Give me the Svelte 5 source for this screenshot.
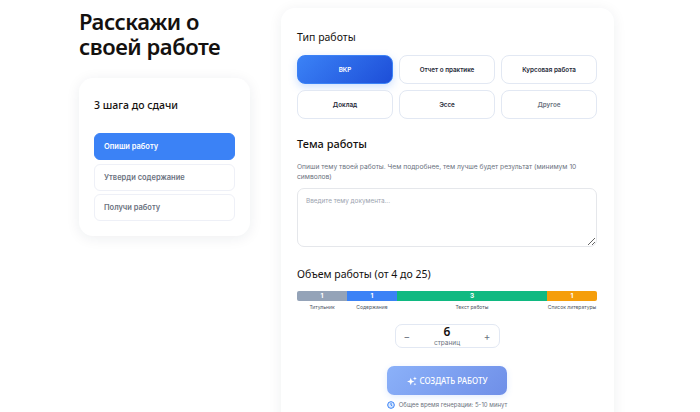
<script>
  const types = [
    { label: 'ВКР', cls: 'active' },
    { label: 'Отчет о практике', cls: '' },
    { label: 'Курсовая работа', cls: '' },
    { label: 'Доклад', cls: '' },
    { label: 'Эссе', cls: '' },
    { label: 'Другое', cls: 'muted' }
  ];
  const parts = [
    { n: 1, name: 'Титульник', color: '#94a3b8', grow: 1 },
    { n: 1, name: 'Содержание', color: '#3b82f6', grow: 1 },
    { n: 3, name: 'Текст работы', color: '#10b981', grow: 3 },
    { n: 1, name: 'Список литературы', color: '#f59e0b', grow: 1 }
  ];
</script>

<div class="page">
  <aside class="left">
    <h1>Расскажи о своей работе</h1>
    <section class="steps">
      <h2>3 шага до сдачи</h2>
      <div class="step current">Опиши работу</div>
      <div class="step">Утверди содержание</div>
      <div class="step">Получи работу</div>
    </section>
  </aside>

  <main class="card">
    <h3>Тип работы</h3>
    <div class="types">
      {#each types as t}
        <button class="type {t.cls}">{t.label}</button>
      {/each}
    </div>

    <h3 class="topic">Тема работы</h3>
    <p class="hint">Опиши тему твоей работы. Чем подробнее, тем лучше будет результат (минимум 10 символов)</p>
    <textarea placeholder="Введите тему документа..."></textarea>

    <h3 class="volume">Объем работы (от 4 до 25)</h3>
    <div class="bar">
      {#each parts as p}
        <div class="seg" style="flex-grow:{p.grow}">
          <div class="fill" style="background:{p.color}">{p.n}</div>
          <div class="name">{p.name}</div>
        </div>
      {/each}
    </div>

    <div class="stepper">
      <span class="sign">−</span>
      <div class="count"><b>6</b><small>страниц</small></div>
      <span class="sign">+</span>
    </div>

    <button class="create">
      <svg width="10" height="10" viewBox="0 0 24 24" fill="#fff" aria-hidden="true">
        <path d="M9 4l2.400 6.600L18 13l-6.600 2.400L9 22l-2.400-6.600L0 13l6.600-2.400z" />
        <path d="M19 1l1.300 3.700L24 6l-3.700 1.300L19 11l-1.300-3.700L14 6l3.700-1.300z" />
        <path d="M19 16l1 2.500 2.500 1-2.500 1-1 2.500-1-2.500-2.500-1 2.500-1z" />
      </svg>
      СОЗДАТЬ РАБОТУ
    </button>
    <div class="time">
      <svg width="8" height="8" viewBox="0 0 24 24" fill="#dbeafe" stroke="#3b82f6" stroke-width="3" aria-hidden="true">
        <circle cx="12" cy="12" r="10" />
        <path d="M12 6v6l4 3" fill="none" />
      </svg>
      Общее время генерации: 5-10 минут
    </div>
  </main>
</div>

<style>
  :global(body) {
    margin: 0;
    background: #fff;
    overflow: hidden;
  }
  .page {
    display: flex;
    align-items: flex-start;
    gap: 31px;
    height: 412px;
    padding: 8px 0 0 79px;
    box-sizing: border-box;
    overflow: hidden;
    font-family: Inter, 'Noto Sans', sans-serif;
  }
  .left {
    width: 171px;
    flex: none;
  }
  h1 {
    margin: 1px 0 19px;
    width: 171px;
    font: 600 22px/25px 'Noto Sans', sans-serif;
    letter-spacing: -0.45px;
    color: #14110f;
  }
  .steps {
    background: #fff;
    border-radius: 14px;
    box-shadow: 0 2px 14px rgba(30, 41, 59, 0.08);
    padding: 19px 15px 15px;
    box-sizing: border-box;
    height: 158px;
  }
  h2 {
    margin: 0 0 20px;
    font: 500 10.5px/16px 'Noto Sans', sans-serif;
    color: #14110f;
  }
  .step {
    height: 27px;
    box-sizing: border-box;
    margin-bottom: 3.700px;
    border: 1px solid #eef0f7;
    border-radius: 6px;
    padding-left: 9px;
    display: flex;
    align-items: center;
    font-size: 7.500px;
    font-weight: 600;
    color: #6b7280;
    background: #fff;
  }
  .step.current {
    background: #3b82f6;
    border-color: #3b82f6;
    color: #fff;
  }
  .card {
    width: 333px;
    flex: none;
    height: 500px;
    padding: 21px 17px 21px 16px;
    box-sizing: border-box;
    background: #fff;
    border-radius: 14px;
    box-shadow: 0 2px 14px rgba(30, 41, 59, 0.07);
  }
  h3 {
    margin: 0;
    font: 400 10.500px/16px 'Noto Sans', sans-serif;
    color: #14110f;
  }
  .types {
    display: grid;
    grid-template-columns: repeat(3, 96px);
    grid-auto-rows: 29px;
    gap: 6px 6px;
    margin-top: 10px;
  }
  .type {
    border: 1px solid #e2e8f3;
    border-radius: 8px;
    background: #fff;
    font: 600 6.300px Inter, sans-serif;
    color: #1f2937;
    padding: 0;
  }
  .type.active {
    background: linear-gradient(135deg, #3b82f6, #1d4ed8);
    border-color: #3b82f6;
    color: #fff;
    box-shadow: 0 3px 8px rgba(59, 130, 246, 0.25);
  }
  .type.muted {
    color: #6b7280;
  }
  .topic {
    margin-top: 17px;
    font-weight: 500;
    font-size: 11px;
  }
  .hint {
    margin: 10px 0 6px;
    font-size: 6.700px;
    line-height: 10px;
    color: #6b7280;
  }
  textarea {
    display: block;
    width: 100%;
    height: 59px;
    box-sizing: border-box;
    border: 1px solid #e5e7eb;
    border-radius: 7px;
    padding: 8px;
    font: 6.400px Inter, sans-serif;
    color: #14110f;
    outline: none;
  }
  textarea::placeholder {
    color: #9ca3af;
  }
  .volume {
    margin-top: 19px;
  }
  .bar {
    display: flex;
    margin-top: 9px;
    border-radius: 2px;
  }
  .seg {
    flex: 1 1 0;
    text-align: center;
    min-width: 0;
  }
  .fill {
    height: 10px;
    font-size: 6.500px;
    font-weight: 700;
    line-height: 10px;
    color: #fff;
  }
  .seg:first-child .fill {
    border-radius: 2px 0 0 2px;
  }
  .seg:last-child .fill {
    border-radius: 0 2px 2px 0;
  }
  .name {
    margin-top: 2px;
    font-size: 5px;
    line-height: 8px;
    color: #4b5563;
    white-space: nowrap;
  }
  .stepper {
    display: flex;
    justify-content: space-between;
    align-items: center;
    width: 105px;
    height: 24px;
    margin: 13px auto 0;
    padding: 0 8px;
    box-sizing: border-box;
    border: 1px solid #e2e8f3;
    border-radius: 7px;
  }
  .sign {
    font-size: 10px;
    color: #6b7280;
  }
  .count {
    display: flex;
    flex-direction: column;
    align-items: center;
  }
  .count b {
    font: 600 12px/14px 'Noto Sans', sans-serif;
    color: #14110f;
  }
  .count small {
    font-size: 6.500px;
    line-height: 9px;
    color: #6b7280;
  }
  .create {
    display: flex;
    align-items: center;
    justify-content: center;
    gap: 3px;
    width: 120px;
    height: 29px;
    margin: 18px auto 0;
    border: 0;
    border-radius: 7px;
    background: linear-gradient(135deg, #8bb1f9, #6f8fe8);
    box-shadow: 0 2px 6px rgba(59, 130, 246, 0.15);
    color: #fff;
    font: 500 8px 'Noto Sans', sans-serif;
  }
  .time {
    display: flex;
    align-items: center;
    justify-content: center;
    gap: 4px;
    margin-top: 6px;
    font-size: 6px;
    line-height: 8px;
    color: #6b7280;
  }
</style>
